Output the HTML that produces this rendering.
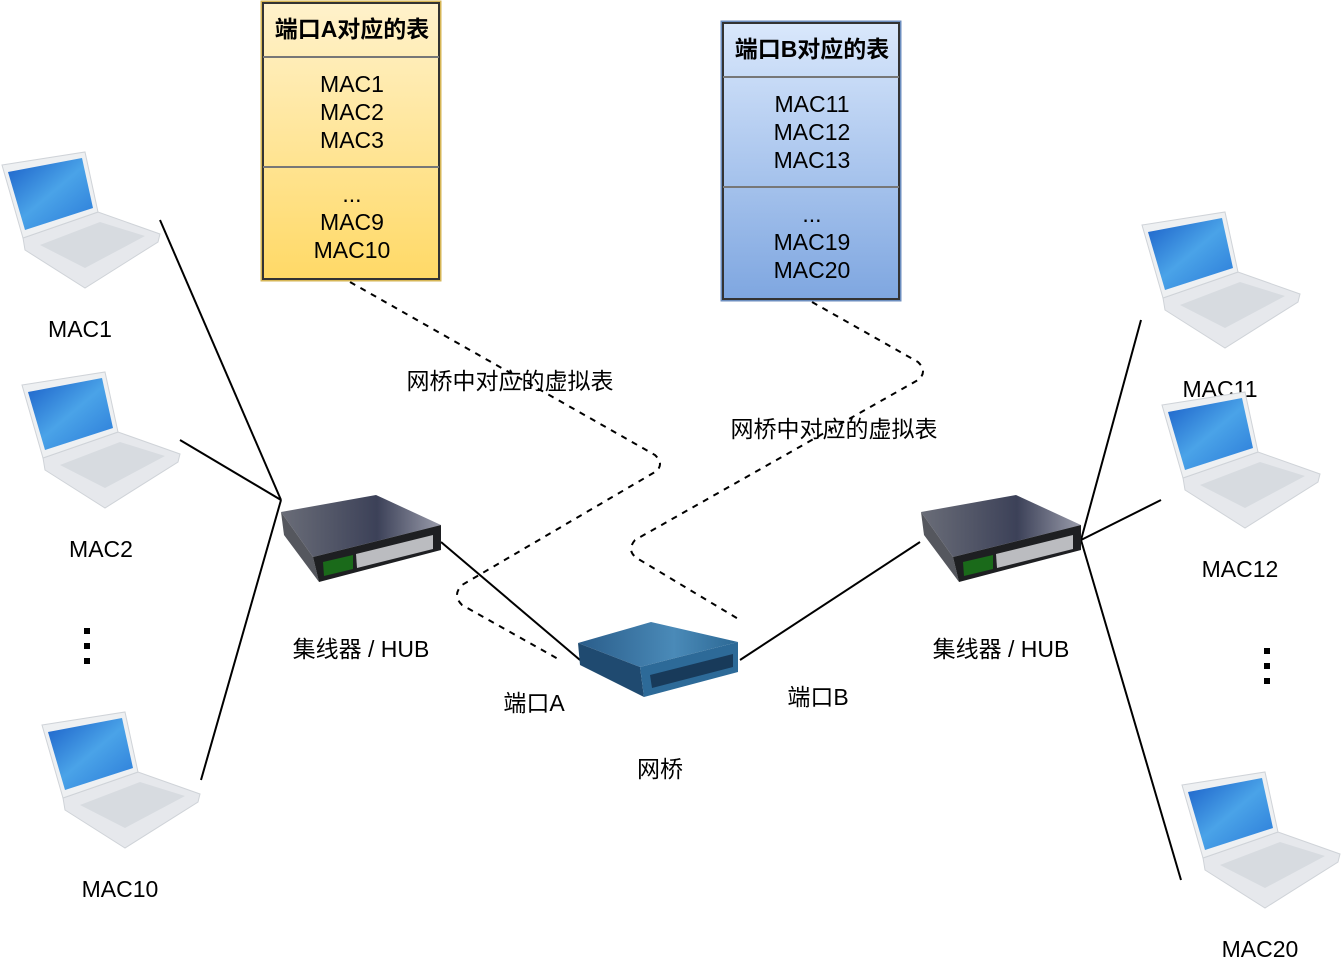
<!DOCTYPE html>
<html><head><meta charset="utf-8"><style>
html,body{margin:0;padding:0;background:#fff;}
svg{display:block;}
text{font-family:"Liberation Sans","Noto Sans CJK SC",sans-serif;font-size:23px;fill:#000;}
</style></head><body>
<svg width="1342" height="962" viewBox="0 0 1342 962" xmlns="http://www.w3.org/2000/svg">
<defs>
<linearGradient id="yg" x1="0" y1="0" x2="0" y2="1"><stop offset="0" stop-color="#fff2cc"/><stop offset="1" stop-color="#ffd966"/></linearGradient>
<linearGradient id="bg" x1="0" y1="0" x2="0" y2="1"><stop offset="0" stop-color="#dae8fc"/><stop offset="1" stop-color="#7ea6e0"/></linearGradient>
<linearGradient id="scr" x1="0" y1="0" x2="1" y2="1"><stop offset="0" stop-color="#1a5fc8"/><stop offset="0.5" stop-color="#4aa3e8"/><stop offset="1" stop-color="#2a7ad8"/></linearGradient>
<linearGradient id="hubtop" x1="0" y1="0" x2="1" y2="0"><stop offset="0" stop-color="#6a6d78"/><stop offset="0.6" stop-color="#3c4158"/><stop offset="1" stop-color="#9a9cab"/></linearGradient>
<linearGradient id="brtop" x1="0" y1="0" x2="1" y2="0"><stop offset="0" stop-color="#2a5d8a"/><stop offset="0.6" stop-color="#4a8ab8"/><stop offset="1" stop-color="#2c6894"/></linearGradient>
<g id="lap">
<polygon points="23,88 98,62 160,84 158,92 85,138 25,100" fill="#e6e8ec" stroke="#cfd3d8" stroke-width="1"/>
<polygon points="40,95 100,72 145,86 85,118" fill="#d7dbe0"/>
<polygon points="2,15 85,2 98,62 23,88" fill="#eef0f2" stroke="#cfd3d8" stroke-width="1"/>
<polygon points="8,22 82,8 93,58 25,80" fill="url(#scr)"/>
</g>
<g id="hub">
<polygon points="0,17 95,0 160,30 32,62" fill="url(#hubtop)"/>
<polygon points="0,17 32,62 38,87 3,40" fill="#55575e"/>
<polygon points="32,62 160,30 160,55 38,87" fill="#1e1f22"/>
<polygon points="42,67 72,60 72,74 43,81" fill="#1a6a1a"/>
<polygon points="75,59 152,40 152,54 76,73" fill="#bbbcc0"/>
</g>
<g id="br">
<polygon points="0,23 73,2 160,22 62,47" fill="url(#brtop)"/>
<polygon points="0,23 62,47 66,77 2,45" fill="#1f4a70"/>
<polygon points="62,47 160,22 160,52 66,77" fill="#2d6a98"/>
<polygon points="72,55 155,34 155,47 74,68" fill="#183a5a"/>
</g>
</defs>

<g stroke="#000" stroke-width="2" fill="none">
<line x1="160" y1="220" x2="281" y2="500"/>
<line x1="180" y1="440" x2="281" y2="500"/>
<line x1="201" y1="780" x2="281" y2="500"/>
<line x1="441" y1="542" x2="580" y2="660"/>
<line x1="740" y1="660" x2="920" y2="542"/>
<line x1="1081" y1="540" x2="1141" y2="320"/>
<line x1="1081" y1="540" x2="1161" y2="500"/>
<line x1="1081" y1="540" x2="1181" y2="880"/>
</g>
<g stroke="#000" stroke-width="2" fill="none" stroke-dasharray="6,6">
<path d="M350,282 L655,455 Q665,465 655,472 L462,585 Q452,595 462,605 L560,660"/>
<path d="M812,302 L918,362 Q928,372 918,380 L635,540 Q625,552 640,560 L740,620"/>
</g>

<use href="#lap" x="0" y="150"/>
<use href="#lap" x="20" y="370"/>
<use href="#lap" x="40" y="710"/>
<use href="#lap" x="1140" y="210"/>
<use href="#lap" x="1180" y="770"/>
<use href="#hub" x="281" y="495"/>
<use href="#hub" x="921" y="495"/>
<use href="#br" x="578" y="620"/>

<rect x="261.5" y="1.5" width="179" height="279" fill="url(#yg)" stroke="#d6b656" stroke-width="2"/>
<rect x="263" y="3" width="176" height="276" fill="none" stroke="#333" stroke-width="2"/>
<line x1="263" y1="57" x2="439" y2="57" stroke="#777" stroke-width="2"/>
<line x1="263" y1="167" x2="439" y2="167" stroke="#777" stroke-width="2"/>
<text x="352" y="37" text-anchor="middle" font-weight="bold">端口A对应的表</text>
<text x="352" y="92" text-anchor="middle">MAC1</text>
<text x="352" y="120" text-anchor="middle">MAC2</text>
<text x="352" y="148" text-anchor="middle">MAC3</text>
<text x="352" y="202" text-anchor="middle">...</text>
<text x="352" y="230" text-anchor="middle">MAC9</text>
<text x="352" y="258" text-anchor="middle">MAC10</text>

<rect x="721.5" y="21.5" width="179" height="279" fill="url(#bg)" stroke="#6c8ebf" stroke-width="2"/>
<rect x="723" y="23" width="176" height="276" fill="none" stroke="#333" stroke-width="2"/>
<line x1="723" y1="77" x2="899" y2="77" stroke="#777" stroke-width="2"/>
<line x1="723" y1="187" x2="899" y2="187" stroke="#777" stroke-width="2"/>
<text x="812" y="57" text-anchor="middle" font-weight="bold">端口B对应的表</text>
<text x="812" y="112" text-anchor="middle">MAC11</text>
<text x="812" y="140" text-anchor="middle">MAC12</text>
<text x="812" y="168" text-anchor="middle">MAC13</text>
<text x="812" y="222" text-anchor="middle">...</text>
<text x="812" y="250" text-anchor="middle">MAC19</text>
<text x="812" y="278" text-anchor="middle">MAC20</text>

<text x="80" y="337" text-anchor="middle">MAC1</text>
<text x="101" y="557" text-anchor="middle">MAC2</text>
<text x="120" y="897" text-anchor="middle">MAC10</text>
<text x="1220" y="397" text-anchor="middle">MAC11</text>
<use href="#lap" x="1160" y="390"/>
<text x="1240" y="577" text-anchor="middle">MAC12</text>
<text x="1260" y="957" text-anchor="middle">MAC20</text>
<text x="361" y="657" text-anchor="middle">集线器 / HUB</text>
<text x="1001" y="657" text-anchor="middle">集线器 / HUB</text>
<text x="534" y="711" text-anchor="middle">端口A</text>
<text x="818" y="705" text-anchor="middle">端口B</text>
<text x="660" y="777" text-anchor="middle">网桥</text>
<text x="510" y="389" text-anchor="middle">网桥中对应的虚拟表</text>
<text x="834" y="437" text-anchor="middle">网桥中对应的虚拟表</text>

<g fill="#000">
<rect x="84" y="628" width="6" height="6"/><rect x="84" y="643" width="6" height="6"/><rect x="84" y="658" width="6" height="6"/>
<rect x="1264" y="648" width="6" height="6"/><rect x="1264" y="663" width="6" height="6"/><rect x="1264" y="678" width="6" height="6"/>
</g>
</svg>
</body></html>
